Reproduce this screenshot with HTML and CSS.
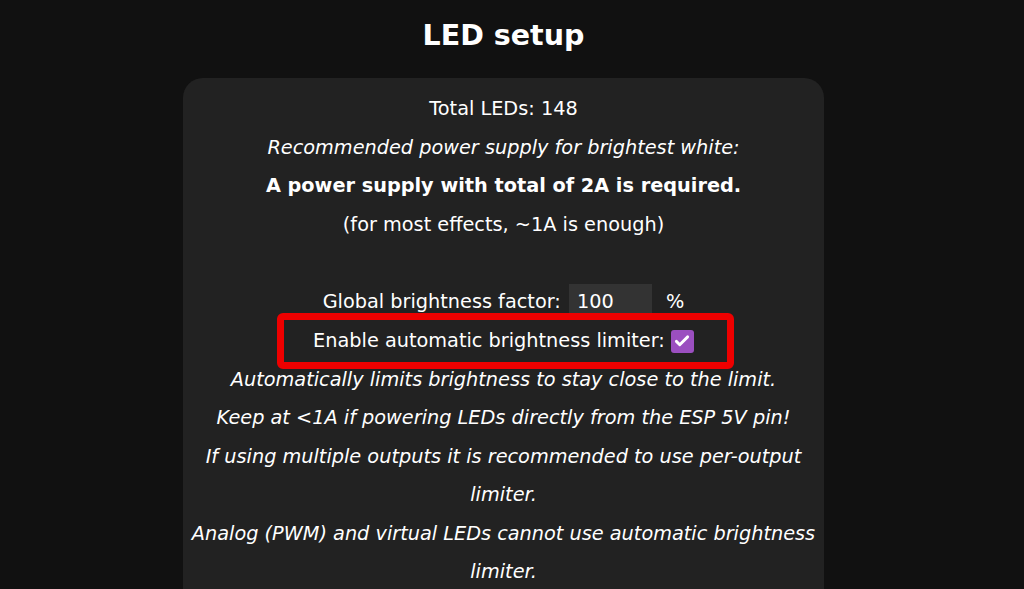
FILE: index.html
```html
<!DOCTYPE html>
<html>
	<head>
		<meta charset="utf-8">
		<title>LED Settings</title>
		<link rel="stylesheet" href="styles.css">
	</head>
	<body>
		<div class="page">
			<h2>LED setup</h2>
			<div class="sec">
				Total LEDs: <span id="lc">148</span><br>
				<i>Recommended power supply for brightest white:</i><br>
				<b id="psu">A power supply with total of 2A is required.</b><br>
				<span id="psu2">(for most effects, ~1A is enough)</span><br>
				<br>
				Global brightness factor: <input type="number" class="num" value="100"> %<br>
				<span class="mark">Enable automatic brightness limiter: <span class="cb"><svg viewBox="0 0 24 24" width="18" height="18"><path d="M4.5 12.5l4.5 4.5L19.5 6.5" fill="none" stroke="#fff" stroke-width="3.8" stroke-linecap="round" stroke-linejoin="round"/></svg></span></span><br>
				<i>Automatically limits brightness to stay close to the limit.<br>
				Keep at &lt;1A if powering LEDs directly from the ESP 5V pin!<br>
				If using multiple outputs it is recommended to use per-output limiter.<br>
				Analog (PWM) and virtual LEDs cannot use automatic brightness limiter.</i><br>
			</div>
		</div>
	</body>
</html>
```

FILE: styles.css
```css
* {
	margin: 0;
	padding: 0;
	box-sizing: border-box;
}

html,
body {
	height: 100%;
	overflow: hidden;
}

body {
	background-color: #111;
	color: #fff;
	font-family: "DejaVu Sans", Verdana, sans-serif;
	font-size: 19.3px;
	line-height: 38.5px;
	text-align: center;
}

.page {
	width: 1007px;
}

h2 {
	font-size: 28.5px;
	line-height: 36px;
	font-weight: bold;
	padding: 18px 0 24px;
}

.sec {
	width: 641px;
	margin: 0 auto;
	padding: 12px 0 20px;
	background-color: #222;
	border-radius: 20px;
}

.num {
	width: 83px;
	height: 36px;
	padding: 0 8px;
	margin: 0 8px 0 2px;
	border: none;
	background-color: #333;
	color: #fff;
	font: inherit;
	text-align: left;
	vertical-align: middle;
	-moz-appearance: textfield;
}

.num::-webkit-inner-spin-button,
.num::-webkit-outer-spin-button {
	-webkit-appearance: none;
}

/* highlighted row */
.mark {
	position: relative;
	display: inline-block;
	margin-top: 1px;
}

.mark::after {
	content: '';
	position: absolute;
	left: -36px;
	right: -40px;
	top: -9px;
	bottom: -8px;
	border: 7px solid #e00;
	border-radius: 6px;
}

.cb {
	display: inline-flex;
	align-items: center;
	justify-content: center;
	width: 23px;
	height: 23px;
	border-radius: 3px;
	background-color: #9b4fc0;
	vertical-align: -3px;
}

.cb svg {
	display: block;
}
```
